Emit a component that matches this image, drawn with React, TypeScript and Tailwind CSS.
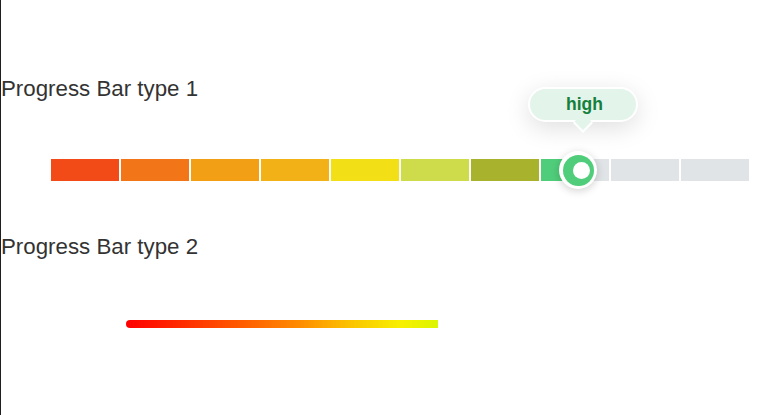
const segments = [
  "bg-[#f24b17]",
  "bg-[#f27617]",
  "bg-[#f29f16]",
  "bg-[#f2b117]",
  "bg-[#f2df15]",
  "bg-[#cedb4a]",
  "bg-[#a8b22c]",
  "bg-[#e1e4e7]",
  "bg-[#e1e4e7]",
  "bg-[#e1e4e7]",
];

const SegmentBar = () => {
  return (
    <div className="relative ml-[50px] flex h-[22px] w-[699px] gap-[2px]">
      {segments.map((color, i) => (
        <div key={i} className={`h-full w-[68px] ${color}`}>
          {i === 7 && <div className="h-full w-[37px] bg-[#50cd7a]" />}
        </div>
      ))}

      {/* tooltip */}
      <div className="absolute left-[477px] top-[-72px] h-[35px] w-[110px]">
        <div className="absolute inset-0 rounded-full border-2 border-white bg-[#e3f4ea] shadow-[0_6px_24px_rgba(0,0,0,0.13)]" />
        <div className="absolute left-[48px] top-[29px] h-[14px] w-[14px] rotate-45 border-b-2 border-r-2 border-white bg-[#e3f4ea]" />
        <span className="absolute inset-0 flex items-center justify-center pl-[3px] text-[17.5px] font-bold leading-none text-[#15803d]">
          high
        </span>
      </div>

      {/* handle */}
      <div className="absolute left-[508px] top-[-8px] flex h-[38px] w-[38px] items-center justify-center rounded-full bg-white shadow-[0_2px_8px_rgba(0,0,0,0.18)]">
        <div className="flex h-[31px] w-[31px] items-center justify-center rounded-full bg-[#50cd7a]">
          <div className="ml-[6px] h-[17px] w-[17px] rounded-full bg-white" />
        </div>
      </div>
    </div>
  );
};

const GradientBar = () => {
  return (
    <div className="ml-[125px] h-2 w-[312px] rounded-l-full bg-[linear-gradient(to_right,#ff0000,#ff4a00_30%,#ff8a00_55%,#fbc400_72%,#f8f000_88%,#dcf500)]" />
  );
};

export default function App() {
  return (
    <div className="flex min-h-[415px] flex-col border-l border-[#1f1f1f] bg-white pt-[76px] font-['Liberation_Sans',Arial,sans-serif] text-[#333]">
      <section className="flex flex-col gap-[58px]">
        <h2 className="text-[22.3px] font-normal leading-[25px]">Progress Bar type 1</h2>
        <SegmentBar />
      </section>
      <section className="mt-[53px] flex flex-col gap-[61px]">
        <h2 className="text-[22.3px] font-normal leading-[25px]">Progress Bar type 2</h2>
        <GradientBar />
      </section>
    </div>
  );
}
